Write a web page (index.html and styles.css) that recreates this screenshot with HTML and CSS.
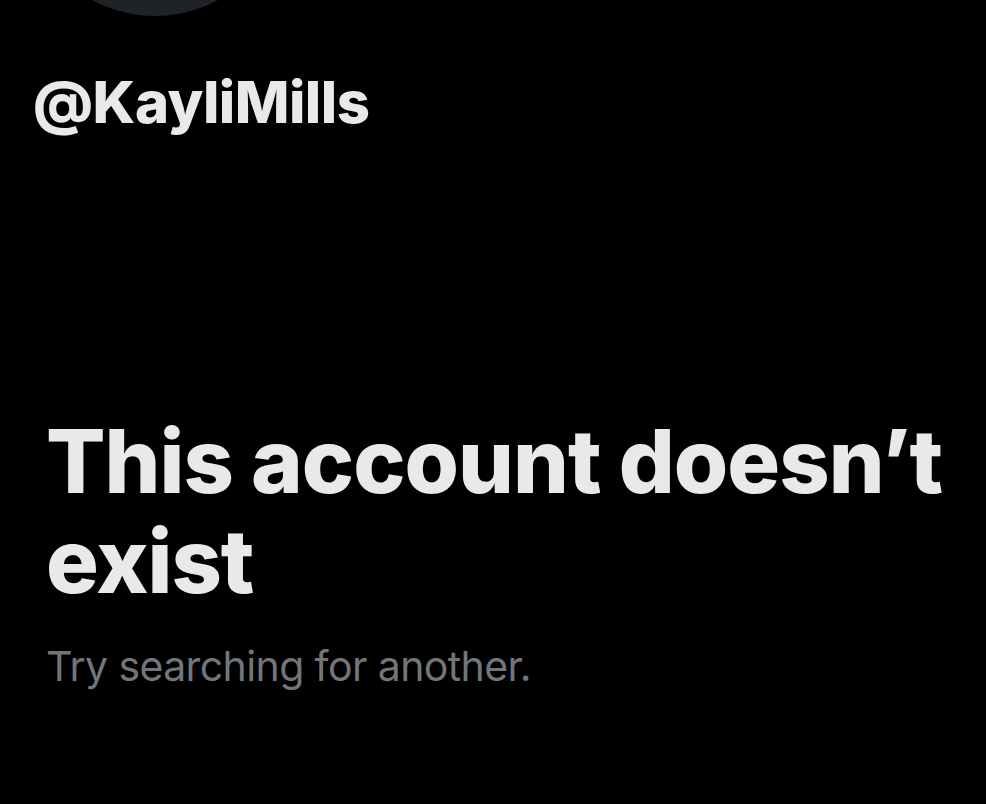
FILE: index.html
```html
<!DOCTYPE html>
<html lang="en">
<head>
<meta charset="utf-8">
<title>This account doesn’t exist</title>
<link rel="stylesheet" href="styles.css">
</head>
<body>
<main class="profile">
  <div class="avatar"></div>
  <div class="handle">@KayliMills</div>
  <section class="empty">
    <h1 class="empty-title">This account doesn’t exist</h1>
    <p class="empty-sub">Try searching for another.</p>
  </section>
</main>
</body>
</html>
```

FILE: styles.css
```css
html, body {
  margin: 0;
  padding: 0;
  background: #000;
}
body {
  font-family: Inter, "Noto Sans", "Liberation Sans", sans-serif;
  color: #e7e9ea;
  width: 986px;
  height: 804px;
  overflow: hidden;
}
.profile {
  display: flex;
  flex-direction: column;
}
.avatar {
  width: 264px;
  height: 264px;
  border-radius: 50%;
  background: #1f2226;
  margin-top: -248px;
  margin-left: 23px;
  flex: none;
}
.handle {
  margin: 51px 0 0 33px;
  font-size: 58px;
  font-weight: 800;
  line-height: 70px;
  letter-spacing: -0.5px;
}
.empty {
  margin: 274px 0 0 46px;
  padding-right: 30px;
}
.empty-title {
  margin: 0;
  font-size: 88px;
  font-weight: 800;
  line-height: 100px;
  letter-spacing: -1px;
}
.empty-sub {
  margin: 30px 0 0;
  font-size: 41px;
  font-weight: 400;
  line-height: 50px;
  letter-spacing: -0.6px;
  color: #71767b;
}
```
